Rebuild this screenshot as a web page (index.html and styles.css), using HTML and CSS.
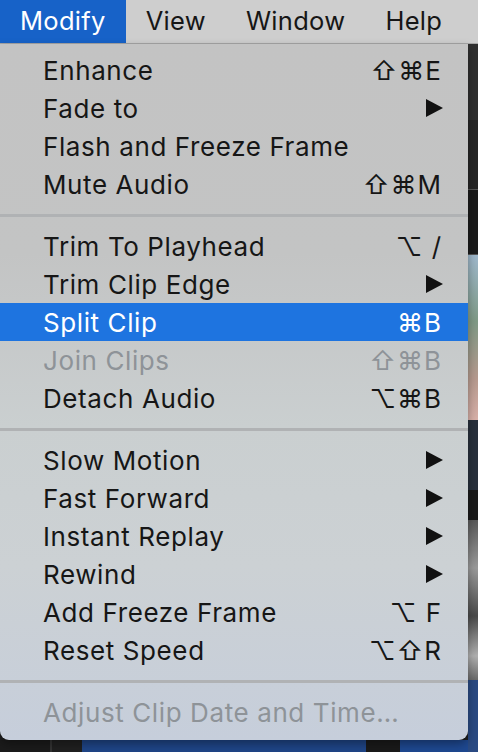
FILE: index.html
```html
<!DOCTYPE html>
<html lang="en">
<head>
<meta charset="utf-8">
<title>Modify menu</title>
<link rel="stylesheet" href="styles.css">
</head>
<body>
<div class="screen">
  <header class="menubar">
    <span class="bar-item active">Modify</span>
    <span class="bar-item">View</span>
    <span class="bar-item">Window</span>
    <span class="bar-item">Help</span>
  </header>

  <div class="app">
    <div class="app-main">
      <div class="app-fill"></div>
      <div class="app-bottom">
        <span class="seg seg-a"></span>
        <span class="seg seg-b"></span>
        <span class="seg seg-c"></span>
        <span class="seg seg-d"></span>
        <span class="seg seg-e"></span>
      </div>
    </div>
    <div class="app-side">
      <span class="blk blk-1"></span>
      <span class="blk blk-2"></span>
      <span class="blk blk-3"></span>
      <span class="blk blk-4"></span>
      <span class="blk blk-5"></span>
      <span class="blk blk-6"></span>
      <span class="blk blk-7"></span>
      <span class="blk blk-8"></span>
    </div>
  </div>

  <div class="menu">
    <div class="item"><span class="label">Enhance</span><span class="key">⇧⌘E</span></div>
    <div class="item"><span class="label">Fade to</span><svg class="arrow" viewBox="0 0 17 18"><polygon points="0,0 17,9 0,18"/></svg></div>
    <div class="item"><span class="label">Flash and Freeze Frame</span></div>
    <div class="item"><span class="label">Mute Audio</span><span class="key">⇧⌘M</span></div>
    <div class="sep"></div>
    <div class="item"><span class="label">Trim To Playhead</span><span class="key">⌥ /</span></div>
    <div class="item"><span class="label">Trim Clip Edge</span><svg class="arrow" viewBox="0 0 17 18"><polygon points="0,0 17,9 0,18"/></svg></div>
    <div class="item selected"><span class="label">Split Clip</span><span class="key">⌘B</span></div>
    <div class="item disabled"><span class="label">Join Clips</span><span class="key">⇧⌘B</span></div>
    <div class="item"><span class="label">Detach Audio</span><span class="key">⌥⌘B</span></div>
    <div class="sep"></div>
    <div class="item"><span class="label">Slow Motion</span><svg class="arrow" viewBox="0 0 17 18"><polygon points="0,0 17,9 0,18"/></svg></div>
    <div class="item"><span class="label">Fast Forward</span><svg class="arrow" viewBox="0 0 17 18"><polygon points="0,0 17,9 0,18"/></svg></div>
    <div class="item"><span class="label">Instant Replay</span><svg class="arrow" viewBox="0 0 17 18"><polygon points="0,0 17,9 0,18"/></svg></div>
    <div class="item"><span class="label">Rewind</span><svg class="arrow" viewBox="0 0 17 18"><polygon points="0,0 17,9 0,18"/></svg></div>
    <div class="item"><span class="label">Add Freeze Frame</span><span class="key">⌥ F</span></div>
    <div class="item"><span class="label">Reset Speed</span><span class="key">⌥⇧R</span></div>
    <div class="sep"></div>
    <div class="item disabled"><span class="label">Adjust Clip Date and Time…</span></div>
  </div>
</div>
</body>
</html>
```

FILE: styles.css
```css
* { box-sizing: border-box; }
html, body { margin: 0; padding: 0; }
body {
  width: 478px;
  height: 752px;
  overflow: hidden;
  background: #1c1c1c;
  font-family: "Inter", "Liberation Sans", "DejaVu Sans", sans-serif;
}
.screen {
  position: relative;
  width: 478px;
  height: 752px;
  display: flex;
  flex-direction: column;
}

/* menu bar */
.menubar {
  height: 44px;
  flex: 0 0 44px;
  display: flex;
  align-items: stretch;
  background: #cecece;
  border-bottom: 1px solid #a6a6a6;
}
.bar-item {
  display: flex;
  align-items: center;
  padding: 0 20px 2px 20px;
  font-size: 25.5px;
  color: #161616;
  letter-spacing: 0.3px;
}
.bar-item.active {
  background: #1762c8;
  color: #ffffff;
}

/* backdrop app */
.app {
  flex: 1;
  display: flex;
}
.app-main {
  width: 468px;
  display: flex;
  flex-direction: column;
}
.app-fill { flex: 1; background: #1e1e1e; }
.app-bottom {
  height: 12px;
  display: flex;
}
.seg { display: block; height: 100%; }
.seg-a { width: 50px; background: #1b1b1b; }
.seg-b { width: 32px; background: #202020; border-left: 2px solid #333; }
.seg-c { width: 284px; background: #1f4587; }
.seg-d { width: 34px; background: #1a1a1a; }
.seg-e { flex: 1; background: #1e4890; }

.app-side {
  width: 10px;
  display: flex;
  flex-direction: column;
}
.blk { display: block; width: 100%; overflow: hidden; }
.blk-1 { height: 76px; background: #2f2f2f; }
.blk-2 { height: 70px; background: #262626; border-bottom: 1px solid #555; }
.blk-3 { height: 65px; background: #1b1b1b; border-bottom: 1px solid #555; }
.blk-4 { height: 165px; background: linear-gradient(180deg, #9fb8cc 0%, #7f9a86 40%, #b69a8e 75%, #d8b0a8 100%); }
.blk-5 { height: 70px; background: #28303c; }
.blk-6 { height: 30px; background: #1b1b1b; }
.blk-7 { height: 160px; background: linear-gradient(180deg, #5a5a5a 0%, #9a9a9a 30%, #4a4a4a 60%, #b0b0b0 85%, #6a6a6a 100%); }
.blk-8 { flex: 1; background: #2a4a82; }

/* dropdown menu */
.menu {
  position: absolute;
  top: 44px;
  left: 0;
  width: 468px;
  padding: 7px 0 9px 0;
  background: linear-gradient(180deg, #c3c3c3 0%, #c3c4c4 30%, #cacfd0 55%, #ccd1d4 75%, #c6cedb 100%);
  border-radius: 0 0 9px 9px;
  box-shadow: 0 4px 10px rgba(0,0,0,0.35);
}
.item {
  height: 38px;
  display: flex;
  align-items: center;
  justify-content: space-between;
  padding: 0 26px 0 43px;
  font-size: 26px;
  color: #161616;
  letter-spacing: 0.6px;
}
.item .label { white-space: nowrap; }
.key {
  font-family: "Inter", "DejaVu Sans", sans-serif;
  letter-spacing: 1px;
  white-space: pre;
}
.arrow {
  width: 17px;
  height: 18px;
  fill: #111111;
  margin-right: -1px;
}
.item.selected {
  background: #1e74e0;
  color: #ffffff;
}
.item.disabled { color: #8e9398; }
.sep {
  height: 24px;
  display: flex;
  align-items: center;
}
.sep::before {
  content: "";
  display: block;
  width: 100%;
  height: 3px;
  background: #b0b2b4;
}
```
